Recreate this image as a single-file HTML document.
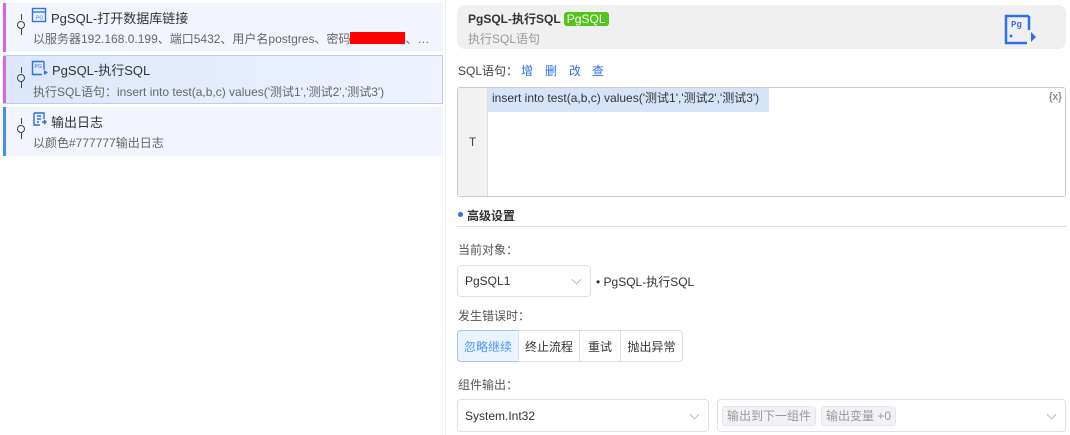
<!DOCTYPE html>
<html><head><meta charset="utf-8"><style>
*{box-sizing:border-box;margin:0;padding:0}
body{width:1070px;height:435px;background:#fff;font-family:"Liberation Sans","Noto Sans CJK SC",sans-serif;font-size:12px;color:#333;position:relative;overflow:hidden}
.abs{position:absolute}
.item{position:absolute;left:3px;width:440px;height:49px;background:#f2f5fd}
.item .bar{position:absolute;left:0;top:0;bottom:0;width:3px}
.item .t{position:absolute;left:48px;top:5px;font-size:13px;color:#333}
.item .d{position:absolute;left:30px;top:27px;font-size:12px;color:#666;white-space:nowrap}
.item .ic{position:absolute;left:28px;top:4px}
.node{position:absolute;left:14px;top:18px;width:8px;height:8px;border:1.3px solid #444;border-radius:50%}
.node:before{content:"";position:absolute;left:2.5px;top:-8px;width:1.3px;height:6px;background:#444}
.node:after{content:"";position:absolute;left:2.5px;top:7px;width:1.3px;height:6px;background:#444}
.lbl{position:absolute;left:458px;font-size:12px;color:#555}
.sel{position:absolute;border:1px solid #dcdfe6;border-radius:4px;background:#fff;font-size:12px;color:#333;padding-left:7px;display:flex;align-items:center}
.chev{position:absolute;right:10px;top:50%;width:7px;height:7px;border-right:1px solid #bbb;border-bottom:1px solid #bbb;transform:translateY(-70%) rotate(45deg)}
.btn{position:absolute;top:330px;height:32px;border:1px solid #dcdfe6;display:flex;align-items:center;justify-content:center;font-size:12px;color:#333;background:#fff}
.tag{display:inline-block;background:#f0f2f5;border:1px solid #e4e6ea;border-radius:3px;color:#999;padding:0 4px;height:20px;line-height:18px;margin-right:5px}
</style></head><body>
<div class="abs" style="left:445px;top:0;width:1px;height:435px;background:#eee"></div>

<div class="item" style="top:3px"><div class="bar" style="background:#d966e0"></div><div class="node"></div>
<svg class="ic" width="16" height="16" viewBox="0 0 16 16"><rect x="1.5" y="1.5" width="13" height="13" fill="none" stroke="#2f6fe8" stroke-width="1.4"/><line x1="1.5" y1="5" x2="14.5" y2="5" stroke="#2f6fe8" stroke-width="1.4"/><text x="5" y="12.5" font-size="5" fill="#2f6fe8" font-family="Liberation Sans">PG</text></svg>
<div class="t">PgSQL-打开数据库链接</div><div class="d">以服务器192.168.0.199、端口5432、用户名postgres、密码<span style="display:inline-block;width:55px;height:12px;background:#f00;vertical-align:-1px"></span>、…</div></div>

<div class="item" style="top:55px;background:linear-gradient(90deg,#dde7fb,#eef3fe);border:1px solid #b8cdf5;left:3px;width:440px"><div class="bar" style="background:#d966e0;left:-1px"></div><div class="node" style="left:13px"></div>
<svg class="ic" width="18" height="16" viewBox="0 0 18 16" style="left:27px;top:4px"><path d="M13 1.5H1.5v13H11" fill="none" stroke="#2f6fe8" stroke-width="1.4"/><path d="M13 1.5v8" stroke="#2f6fe8" stroke-width="1.4"/><path d="M13 10l4 2.5-4 2.5z" fill="#2f6fe8"/><text x="3.5" y="8" font-size="5" fill="#2f6fe8">PG</text></svg>
<div class="t" style="top:4px">PgSQL-执行SQL</div><div class="d" style="top:27px;left:29px">执行SQL语句：insert into test(a,b,c) values('测试1','测试2','测试3')</div></div>

<div class="item" style="top:107px"><div class="bar" style="background:#4a90e2"></div><div class="node"></div>
<svg class="ic" width="16" height="16" viewBox="0 0 16 16"><path d="M3 2h10v6M3 2v12h6M6 5h4M6 8h4M6 11h2M11 11h4M13 9l2 2-2 2" fill="none" stroke="#2f6fe8" stroke-width="1.4"/></svg>
<div class="t">输出日志</div><div class="d">以颜色#777777输出日志</div></div>

<div class="abs" style="left:457px;top:5px;width:609px;height:44px;background:#f0f0f0;border-radius:8px"></div>
<div class="abs" style="left:468px;top:10px;font-size:12px;font-weight:bold;color:#333">PgSQL-执行SQL <span style="display:inline-block;background:#52c41a;color:#fff;font-weight:normal;border-radius:3px;padding:0 3px;font-size:12px;line-height:14px">PgSQL</span></div>
<div class="abs" style="left:468px;top:30px;color:#999;font-size:12px">执行SQL语句</div>
<svg class="abs" style="left:1004px;top:14px" width="34" height="32" viewBox="0 0 34 32"><path d="M25 2H2v27h21" fill="none" stroke="#2f6fe8" stroke-width="2.5"/><path d="M25 2v14" stroke="#2f6fe8" stroke-width="2.5"/><path d="M27 18l5 5-5 5z" fill="#2f6fe8"/><circle cx="7" cy="22" r="1.5" fill="#2f6fe8"/><text x="7" y="13" font-size="9" font-weight="bold" fill="#2f6fe8" font-family="Liberation Mono">Pg</text></svg>

<div class="lbl" style="top:62px;color:#444">SQL语句：</div>
<div class="abs" style="top:62px;left:521px;color:#2f6fe8">增</div>
<div class="abs" style="top:62px;left:545px;color:#2f6fe8">删</div>
<div class="abs" style="top:62px;left:569px;color:#2f6fe8">改</div>
<div class="abs" style="top:62px;left:592px;color:#2f6fe8">查</div>

<div class="abs" style="left:457px;top:87px;width:609px;height:110px;border:1px solid #ccc;border-radius:3px;background:#fff"></div>
<div class="abs" style="left:458px;top:88px;width:30px;height:108px;background:#f2f2f2;border-right:1px solid #ddd;text-align:center;line-height:108px;color:#444">T</div>
<div class="abs" style="left:488px;top:88px;width:281px;height:24px;background:#d6e4fa"></div>
<div class="abs" style="left:492px;top:89px;color:#333">insert into test(a,b,c) values('测试1','测试2','测试3')</div>
<div class="abs" style="left:1049px;top:91px;color:#666;font-size:11px">{x}</div>

<div class="abs" style="left:458px;top:212px;width:5px;height:5px;border-radius:50%;background:#2f6fe8"></div>
<div class="abs" style="left:467px;top:207px;font-weight:bold;color:#333">高级设置</div>
<div class="abs" style="left:457px;top:226px;width:609px;height:1px;background:#ddd"></div>

<div class="lbl" style="top:241px">当前对象：</div>
<div class="sel" style="left:457px;top:265px;width:134px;height:32px">PgSQL1<div class="chev"></div></div>
<div class="abs" style="left:596px;top:273px;color:#333">• PgSQL-执行SQL</div>

<div class="lbl" style="top:307px">发生错误时：</div>
<div class="btn" style="left:457px;width:62px;background:#eaf3ff;border-color:#a3c8f5;color:#4a9af0;border-radius:4px 0 0 4px">忽略继续</div>
<div class="btn" style="left:518px;width:62px">终止流程</div>
<div class="btn" style="left:579px;width:42px">重试</div>
<div class="btn" style="left:620px;width:63px;border-radius:0 4px 4px 0">抛出异常</div>

<div class="lbl" style="top:376px">组件输出：</div>
<div class="sel" style="left:457px;top:399px;width:252px;height:33px">System.Int32<div class="chev"></div></div>
<div class="sel" style="left:717px;top:399px;width:349px;height:33px;padding-left:4px"><span class="tag">输出到下一组件</span><span class="tag">输出变量 +0</span><div class="chev"></div></div>
</body></html>
